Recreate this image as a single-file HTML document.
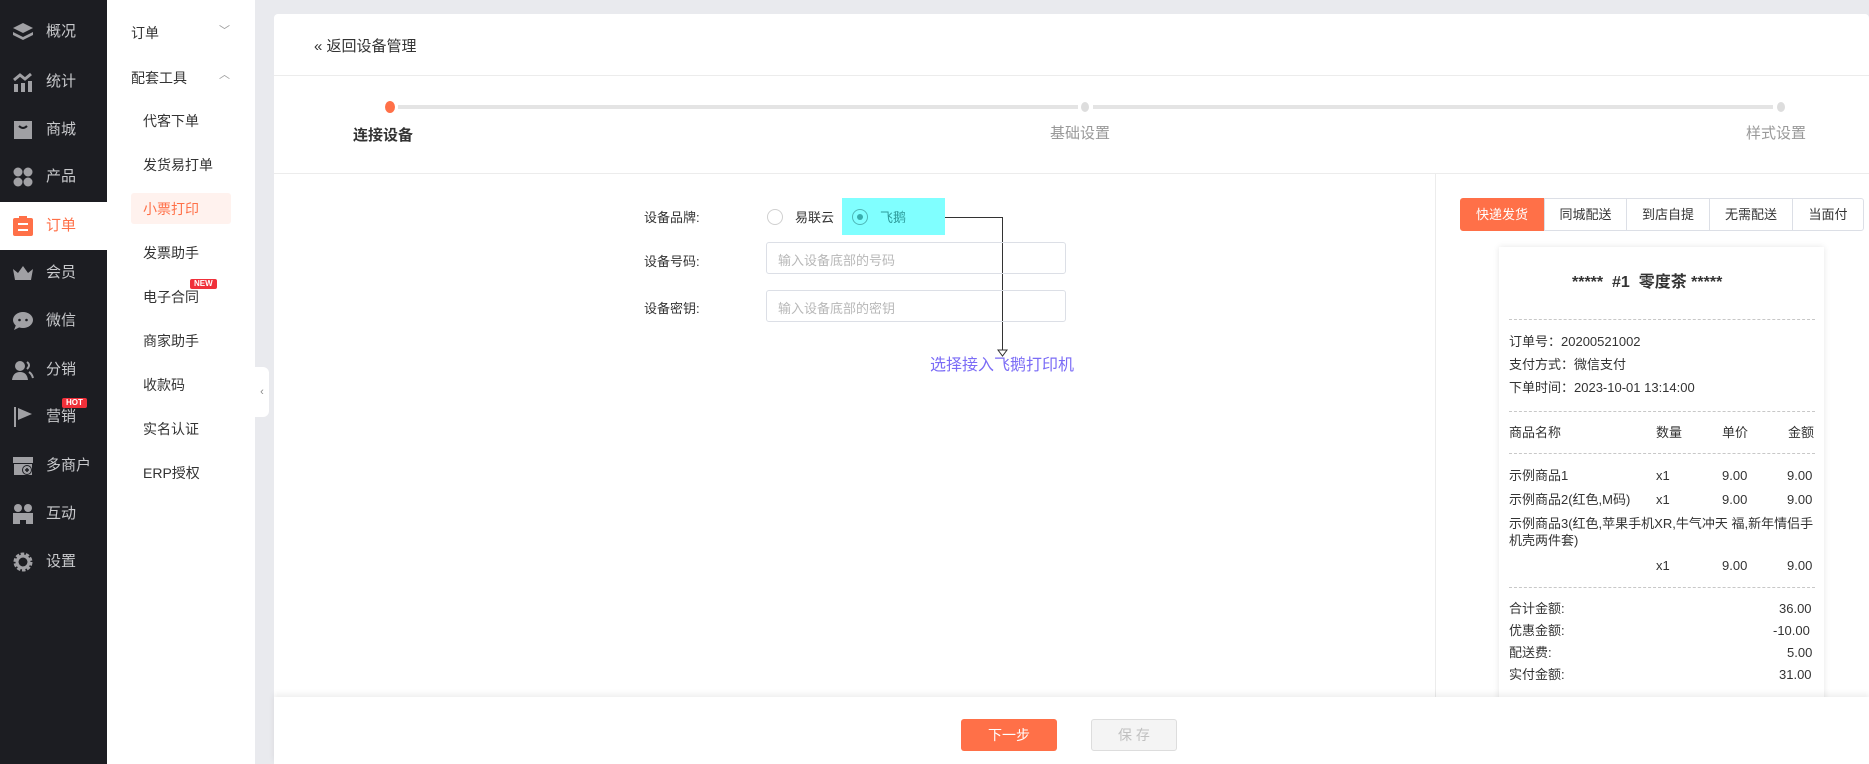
<!DOCTYPE html>
<html><head><meta charset="utf-8"><style>
*{margin:0;padding:0;box-sizing:border-box}
body{width:1869px;height:764px;overflow:hidden;background:#e9eaee;font-family:"Liberation Sans","Noto Sans CJK SC",sans-serif;font-size:14px;color:#333;position:relative}
.abs{position:absolute}
#side{left:0;top:0;width:107px;height:764px;background:#1c1d22}
.mi{position:absolute;left:0;width:107px;height:48px;color:#c8c9cc;font-size:15px;line-height:48px;padding-left:46px}
.mi svg{position:absolute;left:12px;top:14px}
.mi.act{background:#fff;color:#ff7048}
#sub{left:107px;top:0;width:148px;height:764px;background:#fff}
.si{position:absolute;left:36px;font-size:14px;color:#333}
.badge{position:absolute;background:#f0303a;color:#fff;font-size:8px;font-weight:bold;line-height:10px;padding:0 4px;border-radius:2px}
#card{left:274px;top:14px;width:1595px;height:750px;background:#fff;border-radius:4px}
.lbl{position:absolute;font-size:13px;color:#333}
.inp{position:absolute;width:300px;height:32px;border:1px solid #dcdfe6;border-radius:3px;font-size:13px;color:#b8b8b8;padding:7px 11px}
.tab{position:absolute;top:198px;height:33px;border:1px solid #dcdfe6;font-size:13px;line-height:31px;text-align:center;color:#333}
.r{position:absolute;font-size:13px;line-height:18px;color:#333;font-family:"Liberation Sans","Noto Sans CJK SC",sans-serif}
.dash{position:absolute;left:1509px;width:306px;border-top:1px dashed #c8c8c8}
</style></head><body>
<div id="side" class="abs">
 <div class="mi" style="top:8px"><svg width="22" height="20" viewBox="0 0 22 20"><path d="M11 1L21 6 11 11 1 6z" fill="#a0a0a4"/><path d="M1 10l10 5 10-5v3l-10 5-10-5z" fill="#a0a0a4"/></svg>概况</div>
 <div class="mi" style="top:58px"><svg width="22" height="20" viewBox="0 0 22 20"><path d="M2 8l6-5 5 4 6-5" stroke="#a0a0a4" stroke-width="3" fill="none"/><rect x="2" y="12" width="4" height="8" fill="#a0a0a4"/><rect x="9" y="11" width="4" height="9" fill="#a0a0a4"/><rect x="16" y="9" width="4" height="11" fill="#a0a0a4"/></svg>统计</div>
 <div class="mi" style="top:106px"><svg width="22" height="20" viewBox="0 0 22 20"><path d="M2 1h18v18H2z" fill="#a0a0a4"/><path d="M7 6q4 4 8 0" stroke="#1c1d22" stroke-width="2" fill="none"/></svg>商城</div>
 <div class="mi" style="top:153px"><svg width="22" height="20" viewBox="0 0 22 20"><circle cx="6" cy="5" r="4.5" fill="#a0a0a4"/><circle cx="16" cy="5" r="4.5" fill="#a0a0a4"/><circle cx="6" cy="15" r="4.5" fill="#a0a0a4"/><circle cx="16" cy="15" r="4.5" fill="#a0a0a4"/></svg>产品</div>
 <div class="mi act" style="top:202px"><svg width="22" height="20" viewBox="0 0 22 20"><rect x="1" y="2" width="20" height="18" rx="2" fill="#ff7048"/><rect x="7" y="0" width="8" height="4" fill="#ff7048"/><rect x="6" y="7" width="10" height="2" fill="#fff"/><rect x="6" y="13" width="10" height="2" fill="#fff"/></svg>订单</div>
 <div class="mi" style="top:249px"><svg width="22" height="20" viewBox="0 0 22 20"><path d="M1 6l5 4 5-7 5 7 5-4-2 11H3z" fill="#a0a0a4"/></svg>会员</div>
 <div class="mi" style="top:297px"><svg width="22" height="20" viewBox="0 0 22 20"><ellipse cx="11" cy="9" rx="10" ry="8" fill="#a0a0a4"/><path d="M4 14l-2 5 6-3z" fill="#a0a0a4"/><circle cx="7.5" cy="9" r="1.3" fill="#1c1d22"/><circle cx="14.5" cy="9" r="1.3" fill="#1c1d22"/></svg>微信</div>
 <div class="mi" style="top:346px"><svg width="22" height="20" viewBox="0 0 22 20"><circle cx="8" cy="6" r="5" fill="#a0a0a4"/><path d="M0 20q1-8 8-8t8 8z" fill="#a0a0a4"/><path d="M15 2q4 3 0 7M17 12q3 2 4 6" stroke="#a0a0a4" stroke-width="2" fill="none"/></svg>分销</div>
 <div class="mi" style="top:393px"><svg width="22" height="20" viewBox="0 0 22 20"><rect x="2" y="0" width="2" height="20" fill="#a0a0a4"/><path d="M6 1l14 6-14 6z" fill="#a0a0a4"/></svg>营销</div>
 <div class="badge" style="left:62px;top:398px">HOT</div>
 <div class="mi" style="top:442px"><svg width="22" height="20" viewBox="0 0 22 20"><path d="M1 1h20v6H1z" fill="#a0a0a4"/><path d="M2 8h18v11H2z" fill="#a0a0a4"/><circle cx="15" cy="14" r="5" fill="#1c1d22"/><circle cx="15" cy="14" r="4" fill="#a0a0a4"/><path d="M13 14h4M15 12v4" stroke="#1c1d22" stroke-width="1.5"/></svg>多商户</div>
 <div class="mi" style="top:490px"><svg width="22" height="20" viewBox="0 0 22 20"><circle cx="6" cy="4" r="4" fill="#a0a0a4"/><circle cx="16" cy="4" r="4" fill="#a0a0a4"/><path d="M1 9h20v11h-7v-4h-6v4H1z" fill="#a0a0a4"/></svg>互动</div>
 <div class="mi" style="top:538px"><svg width="22" height="20" viewBox="0 0 22 20"><circle cx="11" cy="10" r="7" fill="none" stroke="#a0a0a4" stroke-width="5" stroke-dasharray="3 1.4"/><circle cx="11" cy="10" r="6" fill="none" stroke="#a0a0a4" stroke-width="3"/></svg>设置</div>
</div>
<div id="sub" class="abs">
 <div class="si" style="left:24px;top:23px">订单</div><div class="abs" style="left:112px;top:22px;color:#999;font-size:11px">﹀</div>
 <div class="si" style="left:24px;top:68px">配套工具</div><div class="abs" style="left:112px;top:66px;color:#999;font-size:11px">︿</div>
 <div class="abs" style="left:24px;top:193px;width:100px;height:31px;background:#fff2ee;border-radius:3px"></div>
 <div class="si" style="top:111px">代客下单</div>
 <div class="si" style="top:155px">发货易打单</div>
 <div class="si" style="top:199px;color:#ff7048">小票打印</div>
 <div class="si" style="top:243px">发票助手</div>
 <div class="si" style="top:287px">电子合同</div><div class="badge" style="left:83px;top:279px">NEW</div>
 <div class="si" style="top:331px">商家助手</div>
 <div class="si" style="top:375px">收款码</div>
 <div class="si" style="top:419px">实名认证</div>
 <div class="si" style="top:463px">ERP授权</div>
</div>
<div class="abs" style="left:255px;top:367px;width:14px;height:50px;background:#fff;border-radius:0 6px 6px 0;color:#888;font-size:11px;line-height:50px;text-align:center">‹</div>
<div id="card" class="abs"></div>
<div class="abs" style="left:314px;top:35px;font-size:15px;color:#333">« 返回设备管理</div>
<div class="abs" style="left:274px;top:75px;width:1595px;height:1px;background:#ececec"></div>
<div class="abs" style="left:398px;top:105px;width:680px;height:4px;background:#e4e4e4"></div>
<div class="abs" style="left:1093px;top:105px;width:680px;height:4px;background:#e4e4e4"></div>
<div class="abs" style="left:385px;top:101px;width:10px;height:12px;border-radius:50%;background:#ff7048"></div>
<div class="abs" style="left:1081px;top:102px;width:8px;height:10px;border-radius:50%;background:#ddd"></div>
<div class="abs" style="left:1777px;top:102px;width:8px;height:10px;border-radius:50%;background:#ddd"></div>
<div class="abs" style="left:353px;top:124px;font-size:15px;font-weight:bold;color:#333">连接设备</div>
<div class="abs" style="left:1050px;top:122px;font-size:15px;color:#999">基础设置</div>
<div class="abs" style="left:1746px;top:122px;font-size:15px;color:#999">样式设置</div>
<div class="abs" style="left:274px;top:173px;width:1595px;height:1px;background:#ececec"></div>
<div class="abs" style="left:1435px;top:174px;width:1px;height:523px;background:#ececec"></div>
<div class="lbl" style="left:644px;top:207px">设备品牌:</div>
<div class="abs" style="left:767px;top:209px;width:16px;height:16px;border:1px solid #d0d0d0;border-radius:50%"></div>
<div class="lbl" style="left:795px;top:207px">易联云</div>
<div class="abs" style="left:842px;top:198px;width:103px;height:37px;background:#80ffff"></div>
<div class="abs" style="left:852px;top:209px;width:16px;height:16px;border:1px solid #4fb8b8;border-radius:50%"></div>
<div class="abs" style="left:857px;top:214px;width:6px;height:6px;background:#3aadad;border-radius:50%"></div>
<div class="lbl" style="left:880px;top:207px;color:#2c9a9a">飞鹅</div>
<svg class="abs" style="left:940px;top:210px" width="70" height="160"><path d="M5 7.5H62.5V140" stroke="#333" fill="none"/><path d="M58 140h9l-4.5 6z" fill="#fff" stroke="#333"/></svg>
<div class="abs" style="left:930px;top:357px;font-size:16px;line-height:18px;color:#7b6cf6">选择接入飞鹅打印机</div>
<div class="lbl" style="left:644px;top:251px">设备号码:</div>
<div class="inp" style="left:766px;top:242px">输入设备底部的号码</div>
<div class="lbl" style="left:644px;top:298px">设备密钥:</div>
<div class="inp" style="left:766px;top:290px">输入设备底部的密钥</div>
<div class="tab" style="left:1460px;width:84px;background:#ff7048;border-color:#ff7048;color:#fff;border-radius:3px 0 0 3px">快递发货</div>
<div class="tab" style="left:1544px;width:83px">同城配送</div>
<div class="tab" style="left:1626px;width:84px">到店自提</div>
<div class="tab" style="left:1709px;width:84px">无需配送</div>
<div class="tab" style="left:1792px;width:72px;border-radius:0 3px 3px 0">当面付</div>
<div class="abs" style="left:1499px;top:247px;width:325px;height:460px;background:#fff;box-shadow:0 0 6px rgba(0,0,0,.1)"></div>
<div class="r" style="left:1572px;top:274px;font-size:16px;font-weight:bold">*****&nbsp; #1&nbsp; 零度茶 *****</div>
<div class="dash" style="top:319px"></div>
<div class="r" style="left:1509px;top:333px">订单号：20200521002</div>
<div class="r" style="left:1509px;top:356px">支付方式：微信支付</div>
<div class="r" style="left:1509px;top:379px">下单时间：2023-10-01 13:14:00</div>
<div class="dash" style="top:411px"></div>
<div class="r" style="left:1509px;top:424px">商品名称</div><div class="r" style="left:1656px;top:424px">数量</div><div class="r" style="left:1722px;top:424px">单价</div><div class="r" style="left:1788px;top:424px">金额</div>
<div class="dash" style="top:453px"></div>
<div class="r" style="left:1509px;top:467px">示例商品1</div><div class="r" style="left:1656px;top:467px">x1</div><div class="r" style="left:1722px;top:467px">9.00</div><div class="r" style="left:1787px;top:467px">9.00</div>
<div class="r" style="left:1509px;top:491px">示例商品2(红色,M码)</div><div class="r" style="left:1656px;top:491px">x1</div><div class="r" style="left:1722px;top:491px">9.00</div><div class="r" style="left:1787px;top:491px">9.00</div>
<div class="r" style="left:1509px;top:515px;width:310px;line-height:17px">示例商品3(红色,苹果手机XR,牛气冲天 福,新年情侣手机壳两件套)</div>
<div class="r" style="left:1656px;top:557px">x1</div><div class="r" style="left:1722px;top:557px">9.00</div><div class="r" style="left:1787px;top:557px">9.00</div>
<div class="dash" style="top:587px"></div>
<div class="r" style="left:1509px;top:600px">合计金额:</div><div class="r" style="left:1779px;top:600px">36.00</div>
<div class="r" style="left:1509px;top:622px">优惠金额:</div><div class="r" style="left:1773px;top:622px">-10.00</div>
<div class="r" style="left:1509px;top:644px">配送费:</div><div class="r" style="left:1787px;top:644px">5.00</div>
<div class="r" style="left:1509px;top:666px">实付金额:</div><div class="r" style="left:1779px;top:666px">31.00</div>
<div class="abs" style="left:274px;top:697px;width:1595px;height:67px;background:#fff;box-shadow:0 -3px 6px rgba(0,0,0,.07)"></div>
<div class="abs" style="left:961px;top:719px;width:96px;height:32px;background:#ff7048;border-radius:3px;color:#fff;font-size:14px;line-height:32px;text-align:center">下一步</div>
<div class="abs" style="left:1091px;top:719px;width:86px;height:32px;background:#f4f4f4;border:1px solid #ddd;border-radius:3px;color:#c0c0c0;font-size:14px;line-height:30px;text-align:center">保 存</div>
</body></html>
